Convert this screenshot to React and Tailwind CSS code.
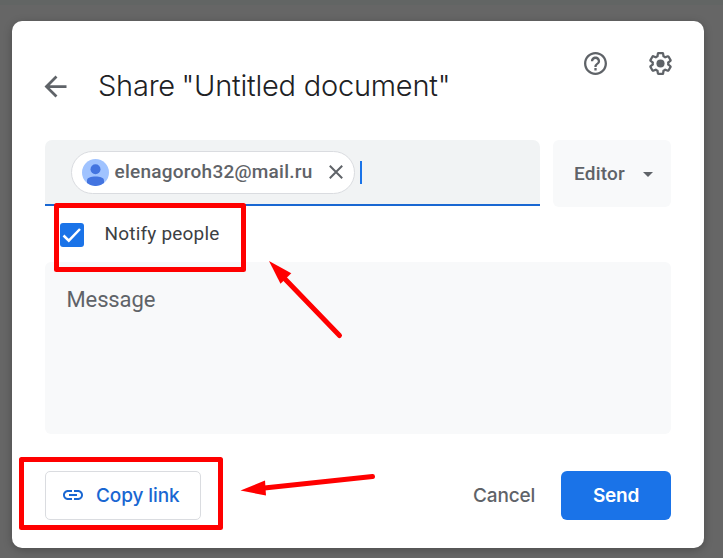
import React from "react";

function BackIcon() {
  return (
    <svg width="33" height="33" viewBox="0 0 24 24" fill="#5f6368">
      <path d="M20 11H7.83l5.59-5.59L12 4l-8 8 8 8 1.41-1.41L7.83 13H20z" />
    </svg>
  );
}

function HelpIcon() {
  return (
    <svg width="27" height="27" viewBox="0.25 0.25 23.5 23.5" fill="#5f6368">
      <path d="M11 18h2v-2h-2v2zm1-16C6.48 2 2 6.48 2 12s4.48 10 10 10 10-4.48 10-10S17.52 2 12 2zm0 18c-4.41 0-8-3.59-8-8s3.59-8 8-8 8 3.59 8 8-3.59 8-8 8zm0-14c-2.21 0-4 1.79-4 4h2c0-1.1.9-2 2-2s2 .9 2 2c0 2-3 1.75-3 5h2c0-2.25 3-2.5 3-5 0-2.21-1.79-4-4-4z" />
    </svg>
  );
}

function GearIcon() {
  return (
    <svg width="27" height="27" viewBox="0 0 24 24" fill="#5f6368">
      <path d="M13.85 22.25h-3.7c-.74 0-1.36-.54-1.45-1.27l-.27-1.89c-.27-.14-.53-.29-.79-.46l-1.8.72c-.7.26-1.47-.03-1.81-.65L2.2 15.53c-.35-.66-.2-1.44.36-1.88l1.53-1.19c-.01-.15-.02-.3-.02-.46 0-.15.01-.31.02-.46l-1.52-1.19c-.59-.45-.74-1.26-.37-1.88l1.85-3.19c.34-.62 1.11-.9 1.79-.63l1.81.73c.26-.17.52-.32.78-.46l.27-1.91c.09-.7.71-1.25 1.44-1.25h3.7c.74 0 1.36.54 1.45 1.27l.27 1.89c.27.14.53.29.79.46l1.8-.72c.71-.26 1.48.03 1.82.65l1.84 3.18c.36.66.2 1.44-.36 1.88l-1.52 1.19c.01.15.02.3.02.46s-.01.31-.02.46l1.52 1.19c.56.45.72 1.23.37 1.86l-1.86 3.22c-.34.62-1.11.9-1.8.63l-1.8-.72c-.26.17-.52.32-.78.46l-.27 1.91c-.1.68-.72 1.22-1.46 1.22zm-3.23-2h2.76l.37-2.55.53-.22c.44-.18.88-.44 1.34-.78l.45-.34 2.38.96 1.38-2.4-2.03-1.58.07-.56c.03-.26.06-.51.06-.78s-.03-.53-.06-.78l-.07-.56 2.03-1.58-1.39-2.4-2.39.96-.45-.35c-.42-.32-.87-.58-1.33-.77l-.52-.22-.37-2.55h-2.76l-.37 2.55-.53.21c-.44.19-.88.44-1.34.79l-.45.33-2.38-.95-1.39 2.39 2.03 1.58-.07.56a7 7 0 0 0-.06.79c0 .26.02.53.06.78l.07.56-2.03 1.58 1.38 2.4 2.39-.96.45.35c.43.33.86.58 1.33.77l.53.22.38 2.55z" />
      <circle cx="12" cy="12" r="3.6" />
    </svg>
  );
}

function Avatar() {
  return (
    <svg className="shrink-0" width="27" height="27" viewBox="0 0 27 27">
      <circle cx="13.5" cy="13.5" r="13.5" fill="#a0c3ff" />
      <circle cx="13.5" cy="10.3" r="5" fill="#4374e0" />
      <path d="M5 24V21.5C5 18.500 9 17.500 13.500 17.500S22 18.500 22 21.500V24A13.500 13.500 0 0 1 5 24z" fill="#4374e0" />
    </svg>
  );
}

function Annotations() {
  return (
    <svg className="pointer-events-none absolute top-0 left-0" width="723" height="558" viewBox="0 0 723 558" fill="none" stroke="#ff0000" strokeWidth="5" strokeLinejoin="round" strokeLinecap="round">
      <rect x="56.500" y="205.500" width="187" height="64" />
      <rect x="21.500" y="459.500" width="199" height="68" />
      <path d="M285 279L339.500 335.500" />
      <path d="M269 261L291.300 273.300L280.500 283.700z" fill="#ff0000" stroke="none" />
      <path d="M262 488.300L372.500 476.500" />
      <path d="M240.500 490.500L265 480.500L266 495.500z" fill="#ff0000" stroke="none" />
    </svg>
  );
}

export default function App() {
  return (
    <div className="relative h-[558px] w-[723px] overflow-hidden bg-[#666666] font-['Roboto',sans-serif]">
      <div className="h-[5px] bg-[#626564]" />
      <div className="mt-4 ml-3 flex h-[527px] w-[692px] flex-col rounded-[10px] bg-white pr-[33px] pl-[33px] shadow-[0_2px_8px_rgba(0,0,0,0.25)]">
        <header className="flex h-[119px] shrink-0">
          <div className="-ml-[6px] flex h-full pt-[49px]">
            <BackIcon />
          </div>
          <h1 className="ml-[26px] pt-[43px] font-['Inter',sans-serif] text-[29px] leading-[44px] font-[350] tracking-[-0.23px] whitespace-nowrap text-[#202124]">
            Share<span className="tracking-[-1.500px]"> </span>"Untitled document"
          </h1>
          <div className="-mr-[3px] ml-auto flex gap-[38px] pt-[29px]">
            <HelpIcon />
            <GearIcon />
          </div>
        </header>
        <div className="flex shrink-0 gap-[13px]">
          <div className="flex h-[66px] w-[495px] items-start rounded-t-[7px] border-b-2 border-[#1967d2] bg-[#f1f3f4] pt-[11px] pl-[26px]">
            <div className="flex h-[43px] w-[284px] items-center rounded-full border border-[#dadce0] bg-white pl-[10px]">
              <Avatar />
              <span className="mb-[2px] ml-[5.500px] w-[199.500px] text-[19px] leading-6 font-medium tracking-[0.25px] whitespace-nowrap text-[#5f6368]">elenagoroh32@mail.ru</span>
              <svg className="mb-px ml-[15px]" width="14" height="14" viewBox="0 0 14 14" stroke="#5f6368" strokeWidth="2">
                <path d="M.8.8L13.200 13.200M13.200.8L.8 13.200" />
              </svg>
            </div>
            <div className="mt-[10px] ml-[5px] h-[23px] w-[2px] bg-[#1a73e8]" />
          </div>
          <button className="flex h-[67px] w-[118px] items-center rounded-[6px] bg-[#f8f9fa] pl-[21px] text-[#5f6368]">
            <span className="w-[52px] text-left text-[19px] leading-6 font-medium tracking-[0.2px] whitespace-nowrap">Editor</span>
            <svg className="mt-[2px] ml-[17px]" width="10" height="5" viewBox="0 0 10 5" fill="#5f6368">
              <path d="M0 0h10L5 5z" />
            </svg>
          </button>
        </div>
        <label className="flex h-[55px] shrink-0 items-start pt-[16px] pl-[15px]">
          <span className="flex size-6 items-center justify-center rounded-[3px] bg-[#1a73e8]">
            <svg width="24" height="24" viewBox="0 0 24 24" fill="none" stroke="white" strokeWidth="2.500">
              <path d="M3.500 12.500L8.800 17.700L20 6" />
            </svg>
          </span>
          <span className="ml-[20.500px] text-[19px] leading-[22px] tracking-[0.2px] text-[#3c4043]">Notify people</span>
        </label>
        <div className="h-[172px] shrink-0 rounded-[6px] bg-[#f8f9fa] pt-[24px] pl-[21.500px] text-[22px] leading-7 tracking-[-0.12px] text-[#5f6368]">Message</div>
        <footer className="mt-[37px] flex h-[49px] shrink-0 items-center font-['Inter',sans-serif] text-[19px] font-medium">
          <button className="flex h-full w-[156px] items-center rounded-[5px] border border-[#dadce0] pl-[17px] text-[#1967d2]">
            <svg className="mt-[-2px]" width="20" height="10" viewBox="2 7 20 10" fill="#1967d2">
              <path d="M3.900 12c0-1.710 1.390-3.100 3.100-3.100h4V7H7c-2.760 0-5 2.240-5 5s2.240 5 5 5h4v-1.900H7c-1.710 0-3.100-1.390-3.100-3.100zM8 13h8v-2H8v2zm9-6h-4v1.900h4c1.710 0 3.100 1.390 3.100 3.100s-1.390 3.100-3.100 3.100h-4V17h4c2.760 0 5-2.240 5-5s-2.240-5-5-5z" />
            </svg>
            <span className="mt-[2px] ml-[13px] tracking-[-0.1px] whitespace-nowrap">Copy link</span>
          </button>
          <button className="ml-auto w-[62px] pt-[2px] tracking-[-0.15px] whitespace-nowrap text-[#5f6368]">Cancel</button>
          <button className="ml-[26px] h-full w-[110px] rounded-[6px] bg-[#1a73e8] pt-[2px] font-semibold tracking-[-0.3px] text-white">Send</button>
        </footer>
      </div>
      <Annotations />
    </div>
  );
}
